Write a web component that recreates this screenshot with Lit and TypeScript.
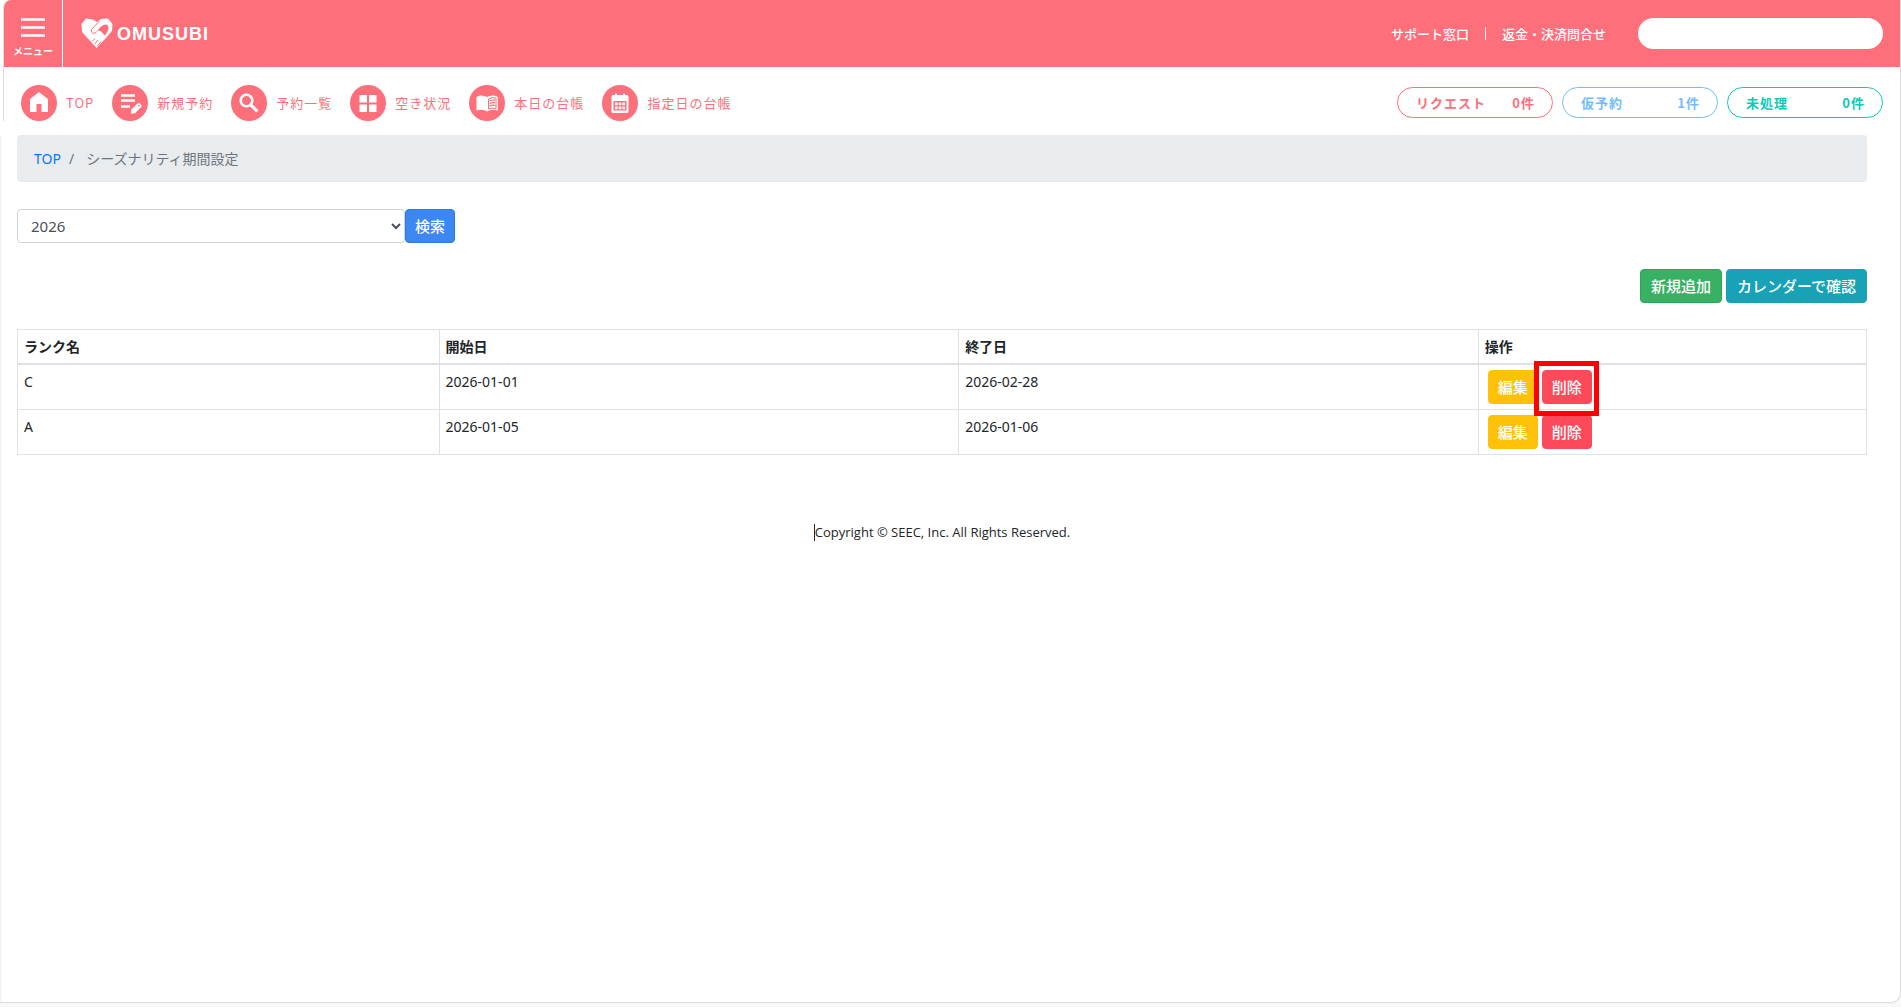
import { LitElement, html, css, svg } from "lit";
import { customElement, state } from "lit/decorators.js";

const icons = {
  home: svg`<path d="M18 7 L27 14 V27 H20.5 V19 H15.5 V27 H9 V14 Z" fill="#fff"/>`,
  edit: svg`<path d="M9 10.5H23M9 15.5H23M9 21.5H18" stroke="#fff" stroke-width="2.4" fill="none"/><path d="M19 28.5 L19.300 24.6 L25.600 18.400 Q26.800 17.400 28 18.600 L29.300 19.900 Q30.200 20.900 29.200 22 L22.800 28.400 Z" fill="#fff"/><circle cx="27" cy="20.600" r=".8" fill="#fd6f7b"/>`,
  search: svg`<circle cx="15.5" cy="15.5" r="5.800" fill="none" stroke="#fff" stroke-width="2.600"/><path d="M19.800 19.800 L26.300 26.300" stroke="#fff" stroke-width="3.200"/>`,
  grid: svg`<path d="M9.5 10h7.5v7.5H9.500zM19 10h7.5v7.5H19zM9.500 19.5h7.5V27H9.500zM19 19.5h7.5V27H19z" fill="#fff"/>`,
  book: svg`<path d="M7.500 12.500 Q8 11 12 10.500 Q16 10.500 18 12 Q20 10.500 24 10.500 Q28.500 11 28.800 12.500 V25.500 Q22 23.500 18 26.500 Q14 23.500 7.500 25.500 Z" fill="#fff"/><path d="M19.500 14 Q23 11.800 27 13 V23.500 Q23 22.500 19.500 24 Z" fill="none" stroke="#fd6f7b" stroke-width="1"/><path d="M20.500 16 Q23 14.600 26 15.200M20.500 18.500 Q23 17.200 26 17.800M20.500 21 Q23 19.800 26 20.400" fill="none" stroke="#fd6f7b" stroke-width="1.200"/>`,
  calendar: svg`<path d="M11 10 H13 V8.500 H15 V10 H21 V8.500 H23 V10 H25 Q26.500 10 26.500 11.500 V26 Q26.500 28 25 28 H11 Q9.500 28 9.500 26 V11.500 Q9.500 10 11 10Z" fill="#fff"/><path d="M11.500 16H24.500V25.500H11.500Z" fill="#fd6f7b"/><path d="M13 17.500h2.700v2.700h-2.700zM16.700 17.500h2.700v2.700h-2.700zM20.400 17.500h2.700v2.700h-2.700zM13 21.500h2.700v2.700h-2.700zM16.700 21.500h2.700v2.700h-2.700zM20.400 21.500h2.700v2.700h-2.700z" fill="#fff"/>`,
};

const links = [
  { icon: icons.home, label: "TOP" },
  { icon: icons.edit, label: "新規予約" },
  { icon: icons.search, label: "予約一覧" },
  { icon: icons.grid, label: "空き状況" },
  { icon: icons.book, label: "本日の台帳" },
  { icon: icons.calendar, label: "指定日の台帳" },
];

const counters = [
  { label: "リクエスト", count: "0件", tone: "pink" },
  { label: "仮予約", count: "1件", tone: "blue" },
  { label: "未処理", count: "0件", tone: "teal" },
];

@customElement("app-root")
export class AppRoot extends LitElement {
  @state() private rows = [
    { rank: "C", start: "2026-01-01", end: "2026-02-28", marked: true },
    { rank: "A", start: "2026-01-05", end: "2026-01-06", marked: false },
  ];

  static styles = css`
    :host {
      display: block;
      min-height: 100vh;
      background: #f8f8f8;
      color: #212529;
      font: 14px/21px "Noto Sans", "Noto Sans CJK JP", sans-serif;
    }
    * { box-sizing: border-box; }
    a { color: inherit; text-decoration: none; }
    button { font: inherit; cursor: pointer; }
    .frame {
      display: flex;
      flex-direction: column;
      min-height: calc(100vh - 4px);
      background: #fff;
      border-right: 1px solid #dcdcdc;
      border-bottom: 1px solid #dcdcdc;
      border-bottom-right-radius: 10px;
    }
    .top {
      margin-left: 3px;
      border-left: 1px solid #dcdcdc;
      border-top-left-radius: 8px;
      overflow: hidden;
      font-family: "Noto Sans CJK JP", sans-serif;
      letter-spacing: 1px;
      font-size: 13px;
    }
    .header {
      display: flex;
      align-items: stretch;
      height: 67px;
      background: #fd6f7b;
      color: #fff;
    }
    .menu {
      display: flex;
      flex-direction: column;
      align-items: center;
      gap: 6px;
      width: 59px;
      padding: 18px 0 0;
      border: 0;
      border-right: 1px solid #fff;
      background: none;
      color: #fff;
      font-weight: 700;
      font-size: 10px;
      line-height: 16px;
    }
    .brand { display: flex; align-items: center; gap: 4px; margin-left: 18px; font: 700 18px/24px "Liberation Sans", sans-serif; }
    .support { display: flex; align-items: center; gap: 16px; margin-left: auto; padding-right: 17px; font-weight: 500; letter-spacing: normal; }
    .divider { width: 1px; height: 13px; background: #fff; }
    .field { width: 245px; height: 31px; margin-left: 16px; padding: 0 16px; border: 0; border-radius: 16px; background: #fff; font: inherit; }
    .nav { display: flex; align-items: center; gap: 18px; padding: 18px 17px 0; color: #fd6f7b; }
    .link { display: flex; align-items: center; gap: 9px; }
    .label { padding-bottom: 2px; }
    .disc { width: 36px; height: 36px; border-radius: 50%; background: #fd6f7b; }
    .counters { display: flex; gap: 9px; margin-left: auto; padding-bottom: 1px; }
    .counter { display: flex; justify-content: space-between; align-items: center; width: 156px; height: 31px; padding: 0 17px 0 18px; border: 1px solid; border-radius: 16px; font-weight: 700; }
    .pink { color: #fd6f7b; }
    .blue { color: #74bdfd; }
    .teal { color: #0acbb7; }
    .main { flex: 1; margin-top: 14px; padding: 0 33px 0 16px; border-left: 1px solid #f0f0f0; }
    .crumbs { display: flex; gap: 8px; height: 47px; align-items: center; padding: 0 17px; border-radius: 4px; background: #e9ecef; color: #6c757d; }
    .crumbs a { color: #007bff; }
    .here { margin-left: 4px; }
    .search { display: flex; margin-top: 27px; }
    .year { width: 388px; height: 34px; padding: 0 9px; border: 1px solid #ced4da; border-radius: 4px; background: #fff; color: #495057; font: inherit; font-size: 15px; }
    .btn { height: 34px; padding: 0 9px; border: 1px solid; border-radius: 4px; color: #fff; font-size: 15px; font-weight: 500; line-height: 22px; white-space: nowrap; }
    .go { background: #3c87f0; border-color: #2b7bea; }
    .add { background: #38b165; border-color: #28a756; }
    .cal { background: #17a2b8; border-color: #17a2b8; }
    .modify { background: #ffc107; border-color: #ffc107; }
    .remove { background: #fc4a5a; border-color: #fc4a5a; }
    .actions { display: flex; justify-content: flex-end; gap: 4px; margin: 26px 0; }
    .actions .btn { padding: 0 10px; }
    .table { width: 100%; table-layout: fixed; border-collapse: collapse; }
    .table th, .table td { padding: 6px; border: 1px solid #dee2e6; text-align: left; vertical-align: top; }
    .table th { border-bottom-width: 2px; }
    .table td.ops { padding: 5px 9px; }
    .rank { width: 22.8%; }
    .date { width: 28.1%; }
    .pair { display: flex; gap: 4px; }
    .slot { position: relative; display: flex; }
    .mark { position: absolute; inset: -9px -7px -12px -8px; border: 5px solid #fe0000; pointer-events: none; z-index: 1; }
    .footer { margin-top: 67px; text-align: center; font: 13px/20px "Open Sans", "Noto Sans", sans-serif; }
    .copy { display: inline-block; border-left: 1px solid #212529; line-height: 17px; }
  `;

  render() {
    return html`
      <div class="frame">
        <div class="top">
          <header class="header">
            <button class="menu">
              <svg width="24" height="19" viewBox="0 0 24 19" aria-hidden="true"><path d="M0 1.500H24M0 9.500H24M0 17.500H24" stroke="#fff" stroke-width="2.400"/></svg>
              <span>メニュー</span>
            </button>
            <a class="brand" href="#">
              <svg width="32" height="31" viewBox="0 0 32 31" aria-hidden="true">
                <path d="M5 .5 L12 1.500 L16 4 L20 1 L27 .5 L31.500 6 L31 13 L24 21 L15.500 30 L1 14 L.5 6Z" fill="#fff"/>
                <path d="M14.500 14.500 L20 8.500 Q26 4.500 27.500 9 Q28 12 24 17.500 L19.500 13 L17 12.500 L14.500 15Z" fill="#fd6f7b"/>
                <path d="M18.500 3 L10.500 11.500 Q9.500 14.500 12 15.500 L14.800 14.500" stroke="#fd6f7b" stroke-width="1" fill="none"/>
                <path d="M11 23.500 L14 20.500M13.500 26 L17 22M16.500 28 L20 23.500" stroke="#fd6f7b" stroke-width="1"/>
              </svg>
              <span>OMUSUBI</span>
            </a>
            <div class="support">
              <a href="#">サポート窓口</a>
              <span class="divider"></span>
              <a href="#">返金・決済問合せ</a>
              <input class="field" type="text" aria-label="検索" />
            </div>
          </header>
          <nav class="nav">
            ${links.map((l) => html`<a class="link" href="#"><svg class="disc" viewBox="0 0 36 36" aria-hidden="true">${l.icon}</svg><span class="label">${l.label}</span></a>`)}
            <div class="counters">
              ${counters.map((c) => html`<a class="counter ${c.tone}" href="#"><span>${c.label}</span><span>${c.count}</span></a>`)}
            </div>
          </nav>
        </div>
        <main class="main">
          <nav class="crumbs"><a href="#">TOP</a><span>/</span><span class="here">シーズナリティ期間設定</span></nav>
          <form class="search" @submit=${(e: Event) => e.preventDefault()}>
            <select class="year" aria-label="年"><option>2026</option></select>
            <button class="btn go">検索</button>
          </form>
          <div class="actions">
            <button class="btn add">新規追加</button>
            <button class="btn cal">カレンダーで確認</button>
          </div>
          <table class="table">
            <thead>
              <tr><th class="rank">ランク名</th><th class="date">開始日</th><th class="date">終了日</th><th>操作</th></tr>
            </thead>
            <tbody>
              ${this.rows.map((r) => html`<tr>
                <td>${r.rank}</td><td>${r.start}</td><td>${r.end}</td>
                <td class="ops"><div class="pair">
                  <button class="btn modify">編集</button>
                  <span class="slot"><button class="btn remove">削除</button>${r.marked ? html`<span class="mark"></span>` : null}</span>
                </div></td>
              </tr>`)}
            </tbody>
          </table>
          <footer class="footer"><span class="copy">Copyright © SEEC, Inc. All Rights Reserved.</span></footer>
        </main>
      </div>
    `;
  }
}
